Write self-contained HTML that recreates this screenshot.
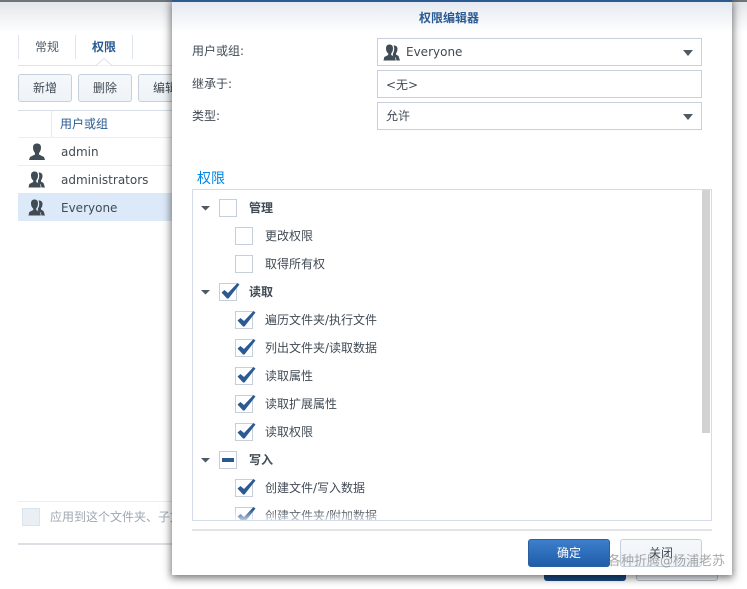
<!DOCTYPE html>
<html lang="zh"><head><meta charset="utf-8"><style>
html,body{margin:0;padding:0;background:#fff}
#r{position:relative;width:747px;height:589px;overflow:hidden;background:#fff;font:12px "DejaVu Sans","Noto Sans CJK SC",sans-serif;color:#414b55}
#r div,#r svg,#r span.a{position:absolute}
.t{white-space:nowrap;line-height:18px;height:18px}
.btn{box-sizing:border-box;border:1px solid #c6d0dc;border-radius:3px;background:linear-gradient(#f5f8fb,#eef3f8);text-align:center;line-height:26px;height:28px}
.f{box-sizing:border-box;left:377px;width:325px;height:28px;border:1px solid #c8d0dc;border-top-color:#c8d0e0;background:#fff}
.cb{box-sizing:border-box;width:18px;height:18px;border:1px solid #c5cfdc;background:#fff}
.tri{width:0;height:0;border-style:solid;border-color:#505a64 transparent transparent transparent}
</style></head><body><div id="r">
<div style="left:0;top:0;width:747px;height:2px;background:#6d747b"></div>
<div style="left:0;top:2px;width:747px;height:31px;background:linear-gradient(#e3e6ea,#fff)"></div>
<div style="left:18px;top:65px;width:160px;height:1px;background:#dfe3e8"></div>
<div style="left:18px;top:35px;width:1px;height:24px;background:#e2e7ee"></div>
<div style="left:75px;top:35px;width:1px;height:24px;background:#dfe5ec"></div>
<div style="left:132px;top:35px;width:1px;height:24px;background:#dfe5ec"></div>
<svg style="left:96px;top:58px" width="16" height="8"><path d="M0 7.500L8 .5L16 7.500" fill="#fff" stroke="#dfe3e8"/></svg>
<div class="t" style="left:35px;top:38px;color:#505a64">常规</div>
<div class="t" style="left:92px;top:38px;color:#2a5a94;font-weight:bold">权限</div>
<div class="btn" style="left:18px;top:74px;width:54px">新增</div>
<div class="btn" style="left:78px;top:74px;width:54px">删除</div>
<div class="btn" style="left:138px;top:74px;width:54px">编辑</div>
<div style="left:18px;top:110px;width:160px;height:1px;background:#d6dee8"></div>
<div style="left:51px;top:111px;width:1px;height:26px;background:#e6eaf0"></div>
<div class="t" style="left:60px;top:115px;color:#2a5a94">用户或组</div>
<div style="left:18px;top:137px;width:160px;height:1px;background:#eceef1"></div>
<div style="left:18px;top:165px;width:160px;height:1px;background:#eceef1"></div>
<div style="left:18px;top:193px;width:160px;height:28px;background:#dce9f8"></div>
<svg style="left:28px;top:143px" width="18" height="17"><path d="M5 4.500C5 1.500 6.800.5 9 .5s4 1 4 4c0 2.500-1 4.500-2 5.500v1.500l5 2.500 1 3H1l1-3 5-2.500V10C6 9 5 7 5 4.500z" fill="#414b55"/></svg>
<svg style="left:28px;top:171px" width="18" height="17"><use href="#g"/></svg>
<svg style="left:28px;top:199px" width="18" height="17"><path id="g" d="M3 4.500C3 1.500 4.500.5 6.500.5s3.500 1 3.500 4c0 2.500-1 4-1.800 5v1.500l3.800 2 .8 3.500H.5l.8-3.500 3.900-2V9.500C4 8.500 3 7 3 4.500zM11 1.500c2 0 3.500 1 3.500 3.500 0 2-.8 3.500-1.500 4.300v1.200l2.500 1.500 1.500 4.500h-3.500l-.8-3-2.800-1.700V9.500c1-1.500 1.300-3 1.300-4.800 0-1.200-.3-2.200-.7-3.200z" fill="#414b55"/></svg>
<div class="t" style="left:61px;top:143px">admin</div>
<div class="t" style="left:61px;top:171px">administrators</div>
<div class="t" style="left:61px;top:199px">Everyone</div>
<div style="left:18px;top:501px;width:160px;height:1px;background:#eceef1"></div>
<div class="cb" style="left:22px;top:508px;background:#e9eff5;border-color:#dbe3ec"></div>
<div class="t" style="left:50px;top:508px;color:#a0a8b2">应用到这个文件夹、子文件夹</div>
<div style="left:18px;top:543px;width:160px;height:2px;background:#dcdfe3"></div>
<div style="left:544px;top:570px;width:82px;height:11px;background:#1b4a85;border-radius:3px"></div>
<div style="left:636px;top:570px;width:82px;height:11px;background:#f0f3f7;border:1px solid #b9c2ce;box-sizing:border-box;border-radius:3px"></div>

<div style="left:172px;top:0;width:560px;height:575px;background:#fff;box-shadow:0 2px 8px 1px rgba(0,0,0,.55);overflow:hidden">
<div style="left:0;top:0;width:560px;height:2px;background:#2b5a93"></div>
<div style="left:0;top:2px;width:560px;height:31px;background:linear-gradient(#e5e9f0,#fff)"></div>
</div>
<div class="t" style="left:419px;top:9px;color:#2a5a94;font-weight:bold">权限编辑器</div>
<div class="t" style="left:192px;top:42px">用户或组:</div>
<div class="t" style="left:192px;top:75px">继承于:</div>
<div class="t" style="left:192px;top:107px">类型:</div>
<div class="f" style="top:38px"></div><div class="f" style="top:70px"></div><div class="f" style="top:102px"></div>
<svg style="left:383px;top:44px" width="18" height="17"><use href="#g"/></svg>
<div class="t" style="left:406px;top:43px">Everyone</div>
<div class="t" style="left:386px;top:76px">&lt;无&gt;</div>
<div class="t" style="left:386px;top:107px">允许</div>
<div class="tri" style="left:683px;top:50px;border-width:6px 5px 0"></div>
<div class="tri" style="left:683px;top:114px;border-width:6px 5px 0"></div>
<div class="t" style="left:197px;top:170px;font-size:14px;color:#0086e5">权限</div>
<div style="left:192px;top:189px;width:520px;height:332px;box-sizing:border-box;border:1px solid #d3dce8;overflow:hidden;background:#fff">
<div style="left:509px;top:0;width:8px;height:243px;background:#d2d2d2"></div>
<svg width="510" height="340" style="left:0;top:0">
<g fill="none" stroke="#c5cfdc"><rect x="26.500" y="9.500" width="17" height="17"/><rect x="42.500" y="37.500" width="17" height="17"/><rect x="42.500" y="65.500" width="17" height="17"/><rect x="26.500" y="93.500" width="17" height="17"/><rect x="42.500" y="121.500" width="17" height="17"/><rect x="42.500" y="149.500" width="17" height="17"/><rect x="42.500" y="177.500" width="17" height="17"/><rect x="42.500" y="205.500" width="17" height="17"/><rect x="42.500" y="233.500" width="17" height="17"/><rect x="26.500" y="261.500" width="17" height="17"/><rect x="42.500" y="289.500" width="17" height="17"/><rect x="42.500" y="317.500" width="17" height="17"/></g>
<g fill="#2b5a93"><path id="c" d="M28.500 102.500l3-2.500 3.500 3L44.500 93l2 1.500L35.500 108.500h-1.500z"/><use href="#c" x="16" y="28"/><use href="#c" x="16" y="56"/><use href="#c" x="16" y="84"/><use href="#c" x="16" y="112"/><use href="#c" x="16" y="140"/><use href="#c" x="16" y="196"/><use href="#c" x="16" y="224"/><rect x="29" y="268" width="12" height="4"/></g>
<g fill="#505a64"><path d="M8 16h9l-4.500 4.500zM8 100h9l-4.500 4.500zM8 268h9l-4.500 4.500z"/></g>
</svg>
<div class="t" style="left:56px;top:9px;font-weight:bold">管理</div>
<div class="t" style="left:72px;top:37px">更改权限</div>
<div class="t" style="left:72px;top:65px">取得所有权</div>
<div class="t" style="left:56px;top:93px;font-weight:bold">读取</div>
<div class="t" style="left:72px;top:121px">遍历文件夹/执行文件</div>
<div class="t" style="left:72px;top:149px">列出文件夹/读取数据</div>
<div class="t" style="left:72px;top:177px">读取属性</div>
<div class="t" style="left:72px;top:205px">读取扩展属性</div>
<div class="t" style="left:72px;top:233px">读取权限</div>
<div class="t" style="left:56px;top:261px;font-weight:bold">写入</div>
<div class="t" style="left:72px;top:289px">创建文件/写入数据</div>
<div class="t" style="left:72px;top:317px">创建文件夹/附加数据</div>
<div style="left:0;top:320px;width:510px;height:11px;background:linear-gradient(rgba(255,255,255,0),rgba(255,255,255,.75))"></div>
</div>
<div style="left:192px;top:529px;width:520px;height:2px;background:#e2e4e7"></div>
<div class="btn" style="left:528px;top:539px;width:82px;background:linear-gradient(#3d7fcc,#1f5da8);border-color:#2b5f9f;color:#fff">确定</div>
<div class="btn" style="left:620px;top:539px;width:82px">关闭</div>
<div class="t" style="left:608px;top:553px;font-size:13px;color:rgba(110,110,110,.6)">各种折腾@杨浦老苏</div>
</div></body></html>
